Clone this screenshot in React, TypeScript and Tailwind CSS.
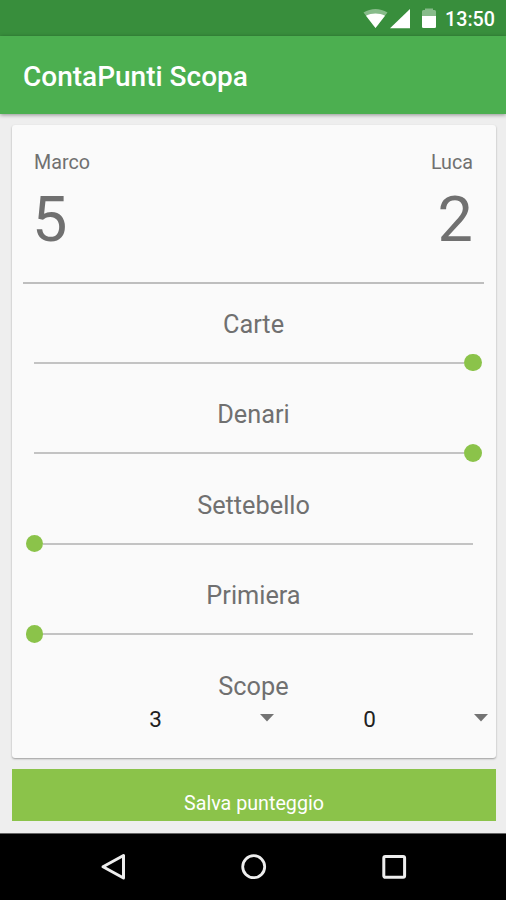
import { useState } from "react";

type Category = {
    name: string;
    side: "left" | "right"; // which player takes the point
};

const initialCategories: Category[] = [
    { name: "Carte", side: "right" },
    { name: "Denari", side: "right" },
    { name: "Settebello", side: "left" },
    { name: "Primiera", side: "left" },
];

function StatusBar() {
    return (
        <div className="flex h-9 shrink-0 items-center justify-end bg-[#388e3c] pr-[11px] text-white">
            <svg width="26" height="20" viewBox="0 0 26 20" className="mt-px">
                <path d="M0.5 3.6C8 -1.2 17 -1.2 24.5 3.6L12.5 19Z" fill="#fff" fillOpacity="0.4" />
                <path d="M3 6.8C8.5 3.6 16.5 3.6 22 6.8L12.5 19Z" fill="#fff" />
            </svg>
            <svg width="20" height="20" viewBox="0 0 20 20" className="ml-px mt-px">
                <path d="M20 0V19.2H0Z" fill="#fff" />
            </svg>
            <svg width="14" height="21" viewBox="0 0 14 21" className="ml-[12px]">
                <path d="M0 8V3.5Q0 2 1.5 2H3V0.5H11V2H12.5Q14 2 14 3.5V8Z" fill="#fff" fillOpacity="0.4" />
                <path d="M0 8H14V19Q14 20 12.5 20H1.5Q0 20 0 19Z" fill="#fff" />
            </svg>
            <span className="ml-[9px] mt-[3px] text-[19.7px] leading-6 font-medium">13:50</span>
        </div>
    );
}

function PointSlider({ category, onToggle }: { category: Category; onToggle: () => void }) {
    return (
        <div className="h-[90.5px]">
            <div className="text-center text-[25.3px] leading-[30px]">{category.name}</div>
            <div
                className={`mr-[13.5px] ml-[13.5px] mt-[14px] flex h-[18px] cursor-pointer items-center ${
                    category.side === "right" ? "flex-row-reverse" : "flex-row"
                }`}
                onClick={onToggle}
            >
                <div className="size-[17.5px] rounded-full bg-[#8bc34a]" />
                <div className={`h-[2px] flex-1 bg-[#c3c3c3] ${category.side === "right" ? "ml-[8.5px]" : "mr-[8.5px]"}`} />
            </div>
        </div>
    );
}

function Spinner({ value }: { value: number }) {
    return (
        <div className="flex w-[125px] items-center justify-between">
            <span className="w-[13px] text-center text-[22.5px] leading-7 text-[#212121]">{value}</span>
            <svg width="14" height="8" viewBox="0 0 14 8" className="mb-[2px]">
                <path d="M0 0H14L7 7.5Z" fill="#737373" />
            </svg>
        </div>
    );
}

function NavigationBar() {
    return (
        <div className="flex h-[67px] shrink-0 items-center justify-center gap-[112px] border-t border-[#666] bg-black pl-[2px]">
            <svg width="28" height="28" viewBox="0 0 28 28" fill="none" stroke="#eee" strokeWidth="3" strokeLinejoin="round">
                <path d="M23.5 2.5V25L3 13.7Z" />
            </svg>
            <svg width="28" height="28" viewBox="0 0 28 28" fill="none" stroke="#eee" strokeWidth="2.8">
                <circle cx="13.7" cy="13.7" r="11" />
            </svg>
            <svg width="28" height="28" viewBox="0 0 28 28" fill="none" stroke="#eee" strokeWidth="3">
                <rect x="3.8" y="3.5" width="20.8" height="20.8" rx="1.5" />
            </svg>
        </div>
    );
}

export default function App() {
    const [categories, setCategories] = useState(initialCategories);

    const toggle = (name: string) => {
        setCategories(
            categories.map((c) => (c.name === name ? { ...c, side: c.side === "left" ? "right" : "left" } : c))
        );
    };

    return (
        <div className="flex h-[900px] w-[506px] flex-col overflow-hidden bg-[#eeeeee] font-[Roboto,sans-serif] text-[#707070]">
            <StatusBar />
            <header className="flex h-[78px] shrink-0 items-center bg-[#4caf50] pl-[23px] pt-[3px] shadow-[0_1px_4px_rgba(0,0,0,0.4)]">
                <h1 className="text-[28px] leading-9 font-medium text-white">ContaPunti Scopa</h1>
            </header>

            <main className="flex flex-1 flex-col pr-[10px] pl-[12px] pt-[11px]">
                <section className="h-[633px] rounded-[3px] bg-[#fafafa] shadow-[0_1px_2px_rgba(0,0,0,0.35)]">
                    {/* Players and totals */}
                    <div className="mr-[12px] ml-[11px] flex h-[158.5px] justify-between border-b-2 border-[#bebebe] pr-[11px] pl-[11px] pt-[26px]">
                        <div>
                            <div className="text-[19.7px] leading-6">Marco</div>
                            <div className="-ml-[2px] mt-[13px] text-[63px] leading-[64px]">5</div>
                        </div>
                        <div className="text-right">
                            <div className="text-[19.7px] leading-6">Luca</div>
                            <div className="mt-[13px] text-[63px] leading-[64px]">2</div>
                        </div>
                    </div>

                    <div className="pt-[26px] pr-px">
                        {categories.map((c) => (
                            <PointSlider key={c.name} category={c} onToggle={() => toggle(c.name)} />
                        ))}
                    </div>

                    <div className="pr-px text-center text-[25.3px] leading-[30px]">Scope</div>
                    <div className="mt-[3.5px] flex justify-end gap-[89px] pr-[8px]">
                        <Spinner value={3} />
                        <Spinner value={0} />
                    </div>
                </section>

                <button className="mt-[11px] h-[52px] bg-[#8bc34a] pt-[17px] text-[19.7px] leading-6 text-white">
                    Salva punteggio
                </button>
            </main>

            <NavigationBar />
        </div>
    );
}
